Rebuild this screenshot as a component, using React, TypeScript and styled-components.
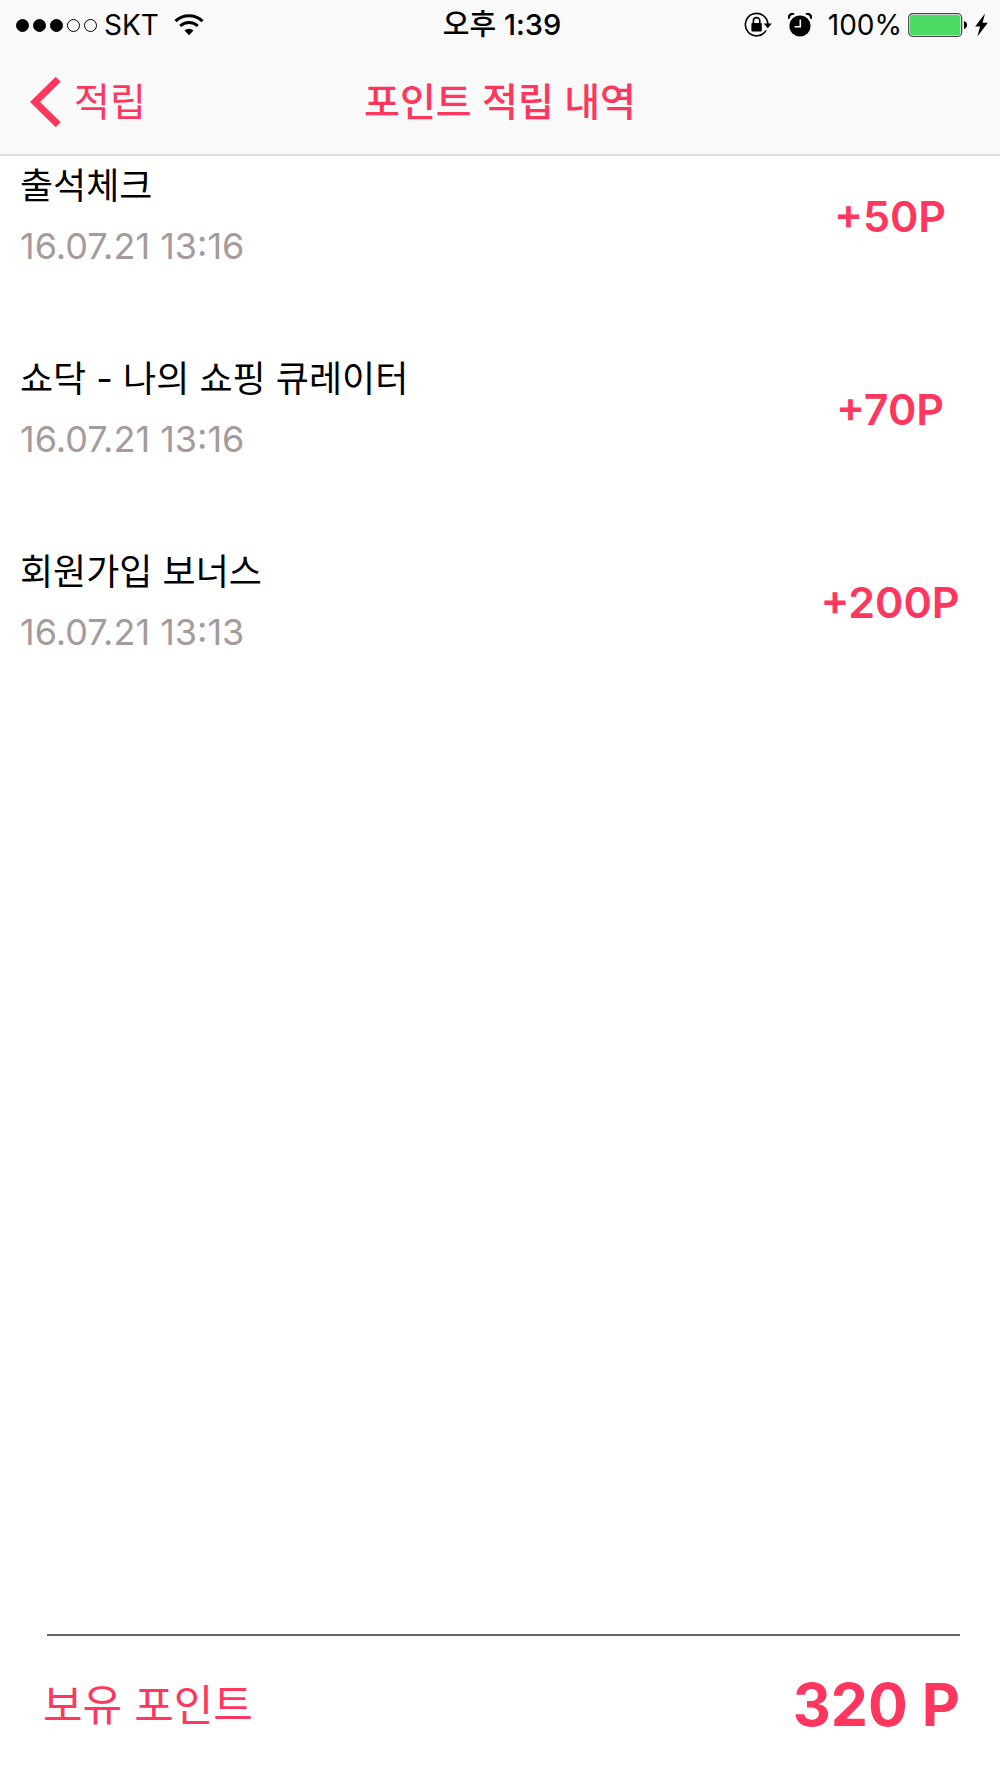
import React from 'react';
import styled, { createGlobalStyle } from 'styled-components';

const accent = '#ff365d';

const GlobalStyle = createGlobalStyle`
  * { box-sizing: border-box; }
  body {
    margin: 0;
    background: #ffffff;
    color: #000000;
    font-family: Inter, "Noto Sans CJK KR", sans-serif;
  }
  h1, h2, p, ul { margin: 0; padding: 0; }
`;

const Screen = styled.div`
  display: flex;
  flex-direction: column;
  min-height: 100vh;
`;

const Header = styled.header`
  background: #f9f9f9;
  border-bottom: 2px solid #dcdcdc;
`;

const StatusBar = styled.div`
  display: grid;
  grid-template-columns: 1fr auto 1fr;
  align-items: center;
  height: 50px;
  padding: 0 12px 0 16px;
  font-size: 28px;
  line-height: 36px;
`;

const StatusGroup = styled.div<{ $end?: boolean }>`
  display: flex;
  align-items: center;
  justify-content: ${(p) => (p.$end ? 'flex-end' : 'flex-start')};
`;

const SignalDots = styled.div`
  display: flex;
  gap: 4px;
  margin-right: 7px;
`;

const Dot = styled.span<{ $on: boolean }>`
  width: 13px;
  height: 13px;
  border: 1px solid #000000;
  border-radius: 50%;
  background: ${(p) => (p.$on ? '#000000' : 'transparent')};
`;

const Glyph = styled.svg<{ $gap?: number }>`
  display: block;
  flex: none;
  margin-left: ${(p) => p.$gap ?? 0}px;
`;

const Percent = styled.span`
  margin-left: 16px;
`;

const Clock = styled.time`
  font-size: 29px;
  font-weight: 500;
`;

const NavBar = styled.nav`
  display: grid;
  grid-template-columns: 1fr auto 1fr;
  align-items: center;
  height: 104px;
  padding: 0 30px;
  color: ${accent};
`;

const BackButton = styled.button`
  display: flex;
  align-items: center;
  justify-self: start;
  gap: 12px;
  padding: 0;
  border: 0;
  background: none;
  color: inherit;
  font: inherit;
  font-size: 39px;
  font-weight: 400;
  line-height: 50px;
  cursor: pointer;
`;

const Title = styled.h1`
  font-size: 39px;
  font-weight: 500;
  line-height: 50px;
`;

const History = styled.ul`
  display: flex;
  flex-direction: column;
  flex: 1;
  gap: 89px;
  padding: 8px 0;
  list-style: none;
`;

const Entry = styled.li`
  display: grid;
  grid-template-columns: 1fr 220px;
  align-items: center;
  padding-left: 20px;
`;

const EntryText = styled.div`
  display: flex;
  flex-direction: column;
  gap: 16px;
`;

const EntryName = styled.h2`
  font-size: 36px;
  font-weight: 400;
  line-height: 44px;
`;

const EntryDate = styled.time`
  color: #a69a9c;
  font-size: 36px;
  font-weight: 400;
  line-height: 44px;
`;

const Amount = styled.p`
  color: ${accent};
  font-size: 43px;
  font-weight: 600;
  line-height: 50px;
  text-align: center;
`;

const Rule = styled.hr`
  height: 2px;
  margin: 0 40px 0 47px;
  border: 0;
  background: #666666;
`;

const Summary = styled.footer`
  display: flex;
  align-items: center;
  justify-content: space-between;
  height: 142px;
  padding: 0 40px 4px 43px;
  color: ${accent};
`;

const SummaryLabel = styled.p`
  font-size: 43px;
  font-weight: 400;
  line-height: 50px;
`;

const SummaryTotal = styled.p`
  font-size: 59px;
  font-weight: 700;
  line-height: 70px;
`;

const entries = [
  { name: '출석체크', date: '16.07.21 13:16', amount: '+50P' },
  { name: '쇼닥 - 나의 쇼핑 큐레이터', date: '16.07.21 13:16', amount: '+70P' },
  { name: '회원가입 보너스', date: '16.07.21 13:13', amount: '+200P' },
];

const WifiIcon = () => (
  <Glyph $gap={15} width="30" height="22" viewBox="0 0 30 22" fill="none" stroke="#000" strokeWidth="3">
    <path d="M1.5 7.2a19.5 19.5 0 0 1 27 0" />
    <path d="M6.2 12a12.8 12.8 0 0 1 17.6 0" />
    <path d="M10.5 16.4a6.6 6.6 0 0 1 9 0L15 21.2z" fill="#000" stroke="none" />
  </Glyph>
);

const RotationLockIcon = () => (
  <Glyph width="28" height="26" viewBox="0 0 28 26" fill="none" stroke="#000">
    <path d="M22.2 18.4a11.2 11.2 0 1 1 1.6-5.8" strokeWidth="1.6" />
    <path d="M19.8 11.6h8l-4 4.6z" fill="#000" stroke="none" />
    <rect x="7.4" y="11" width="10.4" height="8.4" rx="1" fill="#000" stroke="none" />
    <path d="M9.4 11.5V8.8a3.2 3.2 0 0 1 6.4 0v2.7" strokeWidth="1.6" />
  </Glyph>
);

const AlarmIcon = () => (
  <Glyph $gap={16} width="24" height="24" viewBox="0 0 24 24">
    <circle cx="12" cy="13" r="10.6" />
    <path d="M.8 5.8A4.4 4.4 0 0 1 6.2.8" fill="none" stroke="#000" strokeWidth="2.4" />
    <path d="M23.2 5.8A4.4 4.4 0 0 0 17.8.8" fill="none" stroke="#000" strokeWidth="2.4" />
    <path d="M12.3 6.6v7.1H6.6" fill="none" stroke="#f9f9f9" strokeWidth="1.6" />
  </Glyph>
);

const BatteryIcon = () => (
  <Glyph $gap={6} width="60" height="24" viewBox="0 0 60 24">
    <rect x=".7" y=".7" width="53" height="22.6" rx="4" fill="#fff" stroke="#444" strokeWidth="1.2" />
    <rect x="2" y="2" width="50.4" height="20" rx="2.6" fill="#4cd964" />
    <path d="M56 8q3 1 3 4t-3 4z" />
  </Glyph>
);

const BoltIcon = () => (
  <Glyph $gap={7} width="13" height="24" viewBox="0 0 13 24">
    <path d="M10 .6.2 13.4h4.9L2.4 23.4 12.8 9.7H7.6z" />
  </Glyph>
);

const ChevronIcon = () => (
  <Glyph width="32" height="52" viewBox="0 0 32 52" fill="none" stroke="currentColor" strokeWidth="7">
    <path d="M28.2 3.2 5 26l23.2 22.8" />
  </Glyph>
);

export default function App() {
  return (
    <Screen>
      <GlobalStyle />
      <Header>
        <StatusBar>
          <StatusGroup>
            <SignalDots>
              {[true, true, true, false, false].map((on, i) => (
                <Dot key={i} $on={on} />
              ))}
            </SignalDots>
            <span>SKT</span>
            <WifiIcon />
          </StatusGroup>
          <Clock>오후 1:39</Clock>
          <StatusGroup $end>
            <RotationLockIcon />
            <AlarmIcon />
            <Percent>100%</Percent>
            <BatteryIcon />
            <BoltIcon />
          </StatusGroup>
        </StatusBar>
        <NavBar>
          <BackButton type="button">
            <ChevronIcon />
            적립
          </BackButton>
          <Title>포인트 적립 내역</Title>
        </NavBar>
      </Header>
      <History>
        {entries.map((entry) => (
          <Entry key={entry.name}>
            <EntryText>
              <EntryName>{entry.name}</EntryName>
              <EntryDate>{entry.date}</EntryDate>
            </EntryText>
            <Amount>{entry.amount}</Amount>
          </Entry>
        ))}
      </History>
      <Rule />
      <Summary>
        <SummaryLabel>보유 포인트</SummaryLabel>
        <SummaryTotal>320 P</SummaryTotal>
      </Summary>
    </Screen>
  );
}
